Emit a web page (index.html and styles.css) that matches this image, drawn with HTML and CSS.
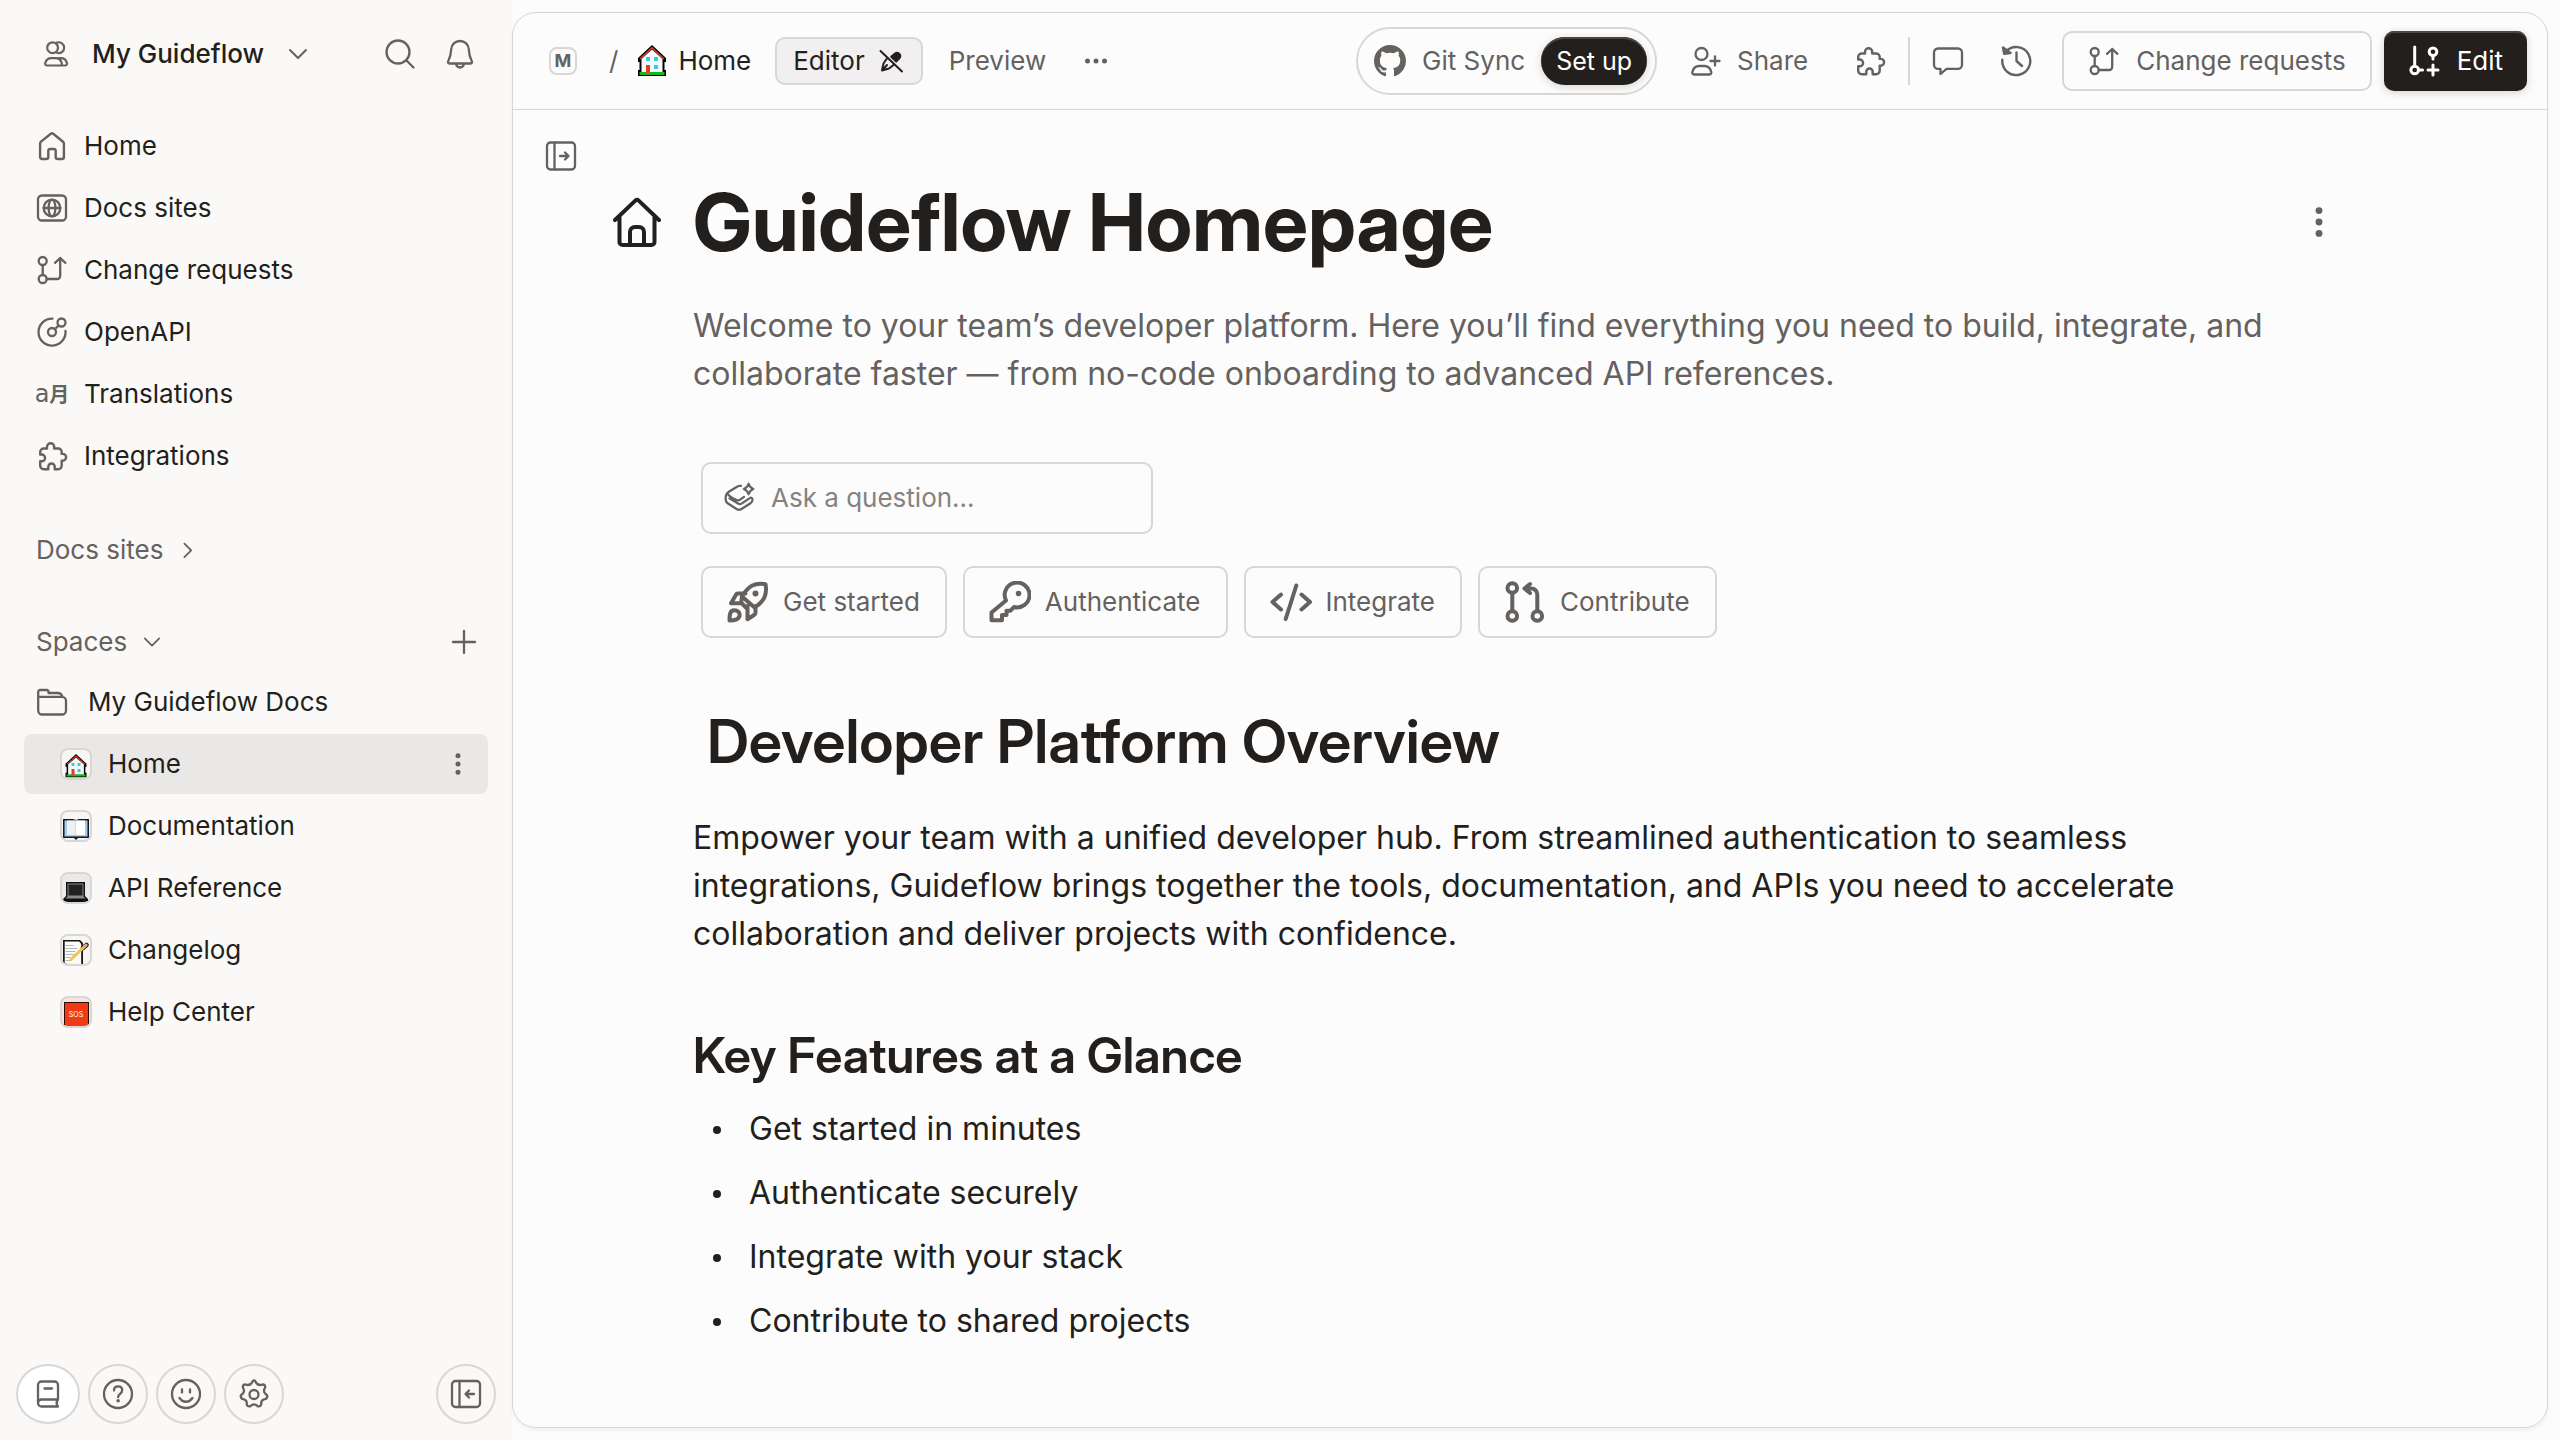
FILE: index.html
```html
<!DOCTYPE html>
<html lang="en">
<head>
<meta charset="utf-8">
<meta name="viewport" content="width=device-width, initial-scale=1">
<title>Guideflow Homepage</title>
<link rel="stylesheet" href="styles.css">
</head>
<body>
<svg class="sprite" aria-hidden="true">
  <symbol id="people" viewBox="0 0 32 32" stroke-width="2.2"><circle cx="12.6" cy="9.7" r="5.4"/><path d="M17 4.6a5.4 5.4 0 1 1 0 10.2M7 27.5h13a1.8 1.8 0 0 0 1.8-2.2C21 22 18.500 20.200 15.500 20.200h-4C8.500 20.200 6 22 5.200 25.300A1.800 1.800 0 0 0 7 27.500zM19 20.200h2c3 0 5.200 1.800 6 5.100a1.800 1.800 0 0 1-1.800 2.200H20"/></symbol>
  <symbol id="search" viewBox="0 0 32 32" stroke-width="2.3"><circle cx="14" cy="14" r="11.500"/><path d="M22.300 22.300l7.200 7.200"/></symbol>
  <symbol id="bell" viewBox="0 0 32 32" stroke-width="2.3"><path d="M16 3c-5 0-8.500 3.600-8.800 8.300C7 17 6.500 19 4.200 23.200c-.6 1.200 0 2.300 1.200 2.300h21.200c1.200 0 1.800-1.100 1.200-2.300C25.500 19 25 17 24.800 11.300 24.500 6.600 21 3 16 3zM12 26c.6 2.300 2 3.500 4 3.500s3.400-1.200 4-3.500"/></symbol>
  <symbol id="down" viewBox="0 0 20 20"><path d="M2 6l8 8 8-8"/></symbol>
  <symbol id="right" viewBox="0 0 20 20"><path d="M6 3l7.500 7.500L6 18"/></symbol>
  <symbol id="home" viewBox="0 0 32 32" stroke-width="2.4"><path d="M14.800 3.800a2 2 0 0 1 2.400 0L27 11.700a2.500 2.500 0 0 1 .9 1.900V27a2 2 0 0 1-2 2h-4.200a2 2 0 0 1-2-2v-6a2 2 0 0 0-2-2h-3.400a2 2 0 0 0-2 2v6a2 2 0 0 1-2 2H6.100a2 2 0 0 1-2-2V13.600A2.500 2.500 0 0 1 5 11.700z"/></symbol>
  <symbol id="site" viewBox="0 0 32 32" stroke-width="2.300"><rect x="2" y="3.500" width="28" height="25" rx="4"/><circle cx="16" cy="16" r="8.300"/><ellipse cx="16" cy="16" rx="3.400" ry="8.300"/><path d="M7.700 16h16.600"/></symbol>
  <symbol id="change" viewBox="0 0 32 32" stroke-width="2.300"><circle cx="6.700" cy="7" r="4"/><circle cx="6.700" cy="25" r="4"/><path d="M6.700 11v10M10.700 25h10.500a3 3 0 0 0 3-3V4M19 8.800L24.200 4l5.200 4.800"/></symbol>
  <symbol id="api" viewBox="0 0 32 32" stroke-width="2.300"><path d="M16.500 2.600A13.500 13.500 0 1 0 29.500 15M18.800 13.200l3.800-3.800"/><circle cx="16" cy="16" r="4"/><circle cx="25.500" cy="6.500" r="4"/></symbol>
  <symbol id="puzzle" viewBox="0 0 32 32" stroke-width="2.400"><path d="M11 8.500V6.800a3.600 3.600 0 0 1 7.200 0v1.700h4A3.500 3.500 0 0 1 25.700 12v1.900h1a3.400 3.400 0 0 1 0 6.800h-1v5a3.500 3.500 0 0 1-3.500 3.500h-3.500v-2.500a3.200 3.200 0 0 0-6.400 0v2.500H7.700a3.500 3.500 0 0 1-3.500-3.500v-4.400h1.500a3.400 3.400 0 0 0 0-6.800H4.200V12a3.500 3.500 0 0 1 3.500-3.500z"/></symbol>
  <symbol id="plus" viewBox="0 0 32 32" stroke-width="2.300"><path d="M16 5v22M5 16h22"/></symbol>
  <symbol id="folder" viewBox="0 0 32 32" stroke-width="2.300"><path d="M2.200 10.800V6a2 2 0 0 1 2-2H11a1.500 1.500 0 0 1 1.500 1.500V7h9.300c2.600 0 4 1.300 4.600 3.800M2.200 10.800H26a4 4 0 0 1 4 4v9.700a4 4 0 0 1-4 4H6.200a4 4 0 0 1-4-4z"/></symbol>
  <symbol id="book" viewBox="0 0 32 32" stroke-width="2.300"><path d="M26 21.500V7a3.500 3.500 0 0 0-3.500-3.500h-13A3.500 3.500 0 0 0 6 7v18a3.500 3.500 0 0 0 3.500 3.500H26c-1.800-2-1.800-4.500 0-7H9.500A3.500 3.500 0 0 0 6 25M12.500 10.500h7.500"/></symbol>
  <symbol id="help" viewBox="0 0 32 32" stroke-width="2.300"><circle cx="16" cy="16" r="14"/><path d="M12 12.500c0-2.600 1.700-4.200 4.100-4.200s4.100 1.600 4.100 3.900c0 3.600-4.100 3.700-4.100 7"/><circle class="dot" cx="16.100" cy="22.700" r="1.800"/></symbol>
  <symbol id="smile" viewBox="0 0 32 32" stroke-width="2.300"><circle cx="16" cy="16" r="14"/><path d="M12 11.500v3M20 11.500v3M9.500 20c3.500 5 9.500 5 13 0"/></symbol>
  <symbol id="gear" viewBox="0 0 32 32" stroke-width="2.300"><path d="M14.600 3.400Q16 1.600 17.400 3.400Q19.700 8.300 24.600 6.500Q27.500 6.500 27.100 9.700Q24.300 14.100 28.800 16.900Q30 19 27.900 20.800Q22.600 21.300 23.300 26.500Q22.500 29 19.700 28.300Q16 24.500 12.300 28.300Q9.500 29 8.700 26.500Q9.400 21.300 4.100 20.800Q2 19 3.200 16.900Q7.700 14.100 4.900 9.700Q4.500 6.500 7.400 6.500Q12.300 8.300 14.600 3.400z"/><circle cx="16" cy="16.500" r="4.500"/></symbol>
  <symbol id="collapse" viewBox="0 0 32 32" stroke-width="2.300"><rect x="2" y="3" width="28" height="26" rx="3.500"/><path d="M9.500 3v26M24 16h-8M19 12.500L15.500 16l3.500 3.500"/></symbol>
  <symbol id="expand" viewBox="0 0 32 32" stroke-width="2.300"><rect x="2" y="2.500" width="28" height="27" rx="3.500"/><path d="M9.500 3v26M15 16h8M20 12.500l3.500 3.500-3.500 3.500"/></symbol>
  <symbol id="dots" viewBox="0 0 32 32"><g class="dot"><circle cx="16" cy="7.700" r="2.500"/><circle cx="16" cy="16" r="2.500"/><circle cx="16" cy="24.300" r="2.500"/></g></symbol>
  <symbol id="more" viewBox="0 0 32 32"><g class="dot"><circle cx="7.500" cy="16" r="2.500"/><circle cx="16" cy="16" r="2.500"/><circle cx="24.500" cy="16" r="2.500"/></g></symbol>
  <symbol id="pencil-off" viewBox="0 0 28 28"><path fill="#231f1c" d="M18 6.500a3.300 3.300 0 0 1 4.800 4.300l-3.600 3.800-5-4.800z"/><path d="M9.500 12l-3 4.500-1.500 7 7-2 4.500-3.500M3.500 4l21.500 20.500M5 23.500l5-5.500"/></symbol>
  <symbol id="github" viewBox="0 0 16 16"><path class="dot" d="M8 0C3.580 0 0 3.580 0 8c0 3.540 2.290 6.530 5.470 7.590.4.070.55-.17.55-.38 0-.19-.01-.82-.01-1.490-2.010.37-2.530-.49-2.690-.94-.09-.23-.48-.94-.82-1.130-.28-.15-.68-.52-.01-.53.63-.01 1.080.58 1.230.82.72 1.210 1.870.87 2.330.66.070-.52.28-.87.51-1.070-1.780-.2-3.640-.89-3.640-3.950 0-.87.31-1.590.82-2.150-.08-.2-.36-1.020.08-2.120 0 0 .67-.21 2.200.82.64-.18 1.320-.27 2-.27s1.360.09 2 .27c1.530-1.040 2.200-.82 2.200-.82.44 1.100.16 1.920.08 2.120.51.56.82 1.270.82 2.150 0 3.070-1.870 3.750-3.650 3.950.29.25.54.73.54 1.480 0 1.070-.01 1.930-.01 2.200 0 .21.15.46.55.38A8.010 8.010 0 0 0 16 8c0-4.420-3.580-8-8-8z"/></symbol>
  <symbol id="invite" viewBox="0 0 32 32" stroke-width="2.300"><circle cx="12.500" cy="9" r="6"/><path d="M5 29.500h15.500a1.800 1.800 0 0 0 1.800-2.200c-.9-4-3.500-6.300-7-6.300h-5c-3.500 0-6.100 2.300-7 6.300A1.800 1.800 0 0 0 5 29.500zM26 11.500v9M21.500 16H30.500"/></symbol>
  <symbol id="comment" viewBox="0 0 32 32" stroke-width="2.300"><path d="M6 3.500h20a4 4 0 0 1 4 4v12.300a4 4 0 0 1-4 4H14.500L8.500 29v-5.200H6a4 4 0 0 1-4-4V7.500a4 4 0 0 1 4-4z"/></symbol>
  <symbol id="history" viewBox="0 0 32 32" stroke-width="2.400"><path d="M2.300 14.800A14 14 0 1 0 6 6.500M3 2.500l1.200 6.300 6.300-.8zM16.500 7.500V16l5.500 5"/></symbol>
  <symbol id="edit" viewBox="0 0 32 32"><path d="M5.700 2v18.500M10 25h3.500M24 11v3M24 20v10M19 25h10"/><circle cx="5.700" cy="25" r="3.800"/><circle cx="24" cy="6.800" r="3.800"/></symbol>
  <symbol id="house-line" viewBox="0 0 48 52"><path d="M2 24L22.300 4.600a2.500 2.500 0 0 1 3.400 0L46 24M6.500 20v26a3 3 0 0 0 3 3h29a3 3 0 0 0 3-3V20M17 49V36a5 5 0 0 1 5-5h4a5 5 0 0 1 5 5v13"/></symbol>
  <symbol id="assist" viewBox="0 0 32 32" stroke-width="2.200"><path d="M18 3.800c-1.500-.2-2.700.1-4 .9L5.800 9.800C3.500 11.300 2.600 13.500 2.600 16.500c0 2.500.8 4 2.400 5l8.500 5.500c1.700 1 3.300 1 5 0l9-5.700c1.500-1 2-2 2-3.500 0-2-1.200-2.700-2.700-1.700L18.500 21.700c-1 .7-2 .7-3 0L6.500 16.300M4.500 11.500c1.200 2.200 3 3.500 5 4.500l4 1.900c1.300.6 2.500.5 3.700-.3L21 14.900M25.600 1.700c.9 3 1.900 4.300 4.700 5.300-2.800 1-3.800 2.300-4.700 5.300-.9-3-1.900-4.300-4.700-5.300 2.800-1 3.800-2.300 4.700-5.300z"/></symbol>
  <symbol id="rocket" viewBox="0 0 42 42"><path d="M38.500 3.200c-11-2-17.500 2.300-23.500 12.300l12.500 11c9.500-6 13-12.500 11-23.300zM18.500 12.500H11a2 2 0 0 0-2 1.200l-5 8.500h10l1-6.700M14 21.500l6 6M20.500 25v13.300l6.500-4.300a3 3 0 0 0 1.500-2.700V25M2.500 39.500c0-6 .5-10.300 4.500-10.300s6.200 2.500 5.500 5.800c-.7 3.500-5 4.500-10 4.500z"/><circle class="dot" cx="28.500" cy="12.500" r="3"/></symbol>
  <symbol id="key" viewBox="0 0 42 42"><path d="M17 19.500a12.400 12.400 0 1 1 8 6.500l-3.500 3.700h-4V34h-4.500v5.300H2.500V31.500z"/><circle class="dot" cx="29.500" cy="12.500" r="2.800"/></symbol>
  <symbol id="code" viewBox="0 0 42 42"><path d="M11 13.500L2.500 21l8.500 7.500M31.500 13.500L40 21l-8.500 7.500M26.300 4.500L15.700 38"/></symbol>
  <symbol id="pull" viewBox="0 0 42 42"><circle cx="8.300" cy="7" r="4.800"/><circle cx="8.300" cy="35" r="4.800"/><circle cx="33.300" cy="35" r="4.800"/><path d="M8.300 12v18M33.300 30V13.500a6 6 0 0 0-6-6H21M26 3l-5.500 4.500L26 12"/></symbol>
  <symbol id="emoji-house" viewBox="0 0 28 32"><path fill="#000" d="M0 31v-6h1.500V17H0v-4L14 0l14 13v4h-1.500v8H28v6z"/><path fill="#f4fafc" d="M3.500 14L14 4.500 24.500 14v14h-21z"/><path fill="none" stroke="#e0442a" stroke-width="1.500" d="M2.500 13.500L14 2.800l11.500 10.700"/><path fill="#34cbe8" d="M8 12h4v4H8zM16 12h4v4h-4zM16 20h4v4h-4z"/><path fill="#19b51c" d="M1.500 27h25v3h-25z"/><path fill="#e23c22" d="M8 20h4v8H8z"/></symbol>
  <symbol id="emoji-book" viewBox="0 0 26 22"><path fill="#0f1720" d="M0 1h10l3 1 3-1h10v19H15l-2 2-2-2H0z"/><path fill="#a9c9e8" d="M1.500 2.500h23v16h-23z"/><path fill="#eef0f2" d="M4 2.500h8.500V17H4z"/><path fill="#fff" d="M13 2.500h9V17h-9z"/></symbol>
  <symbol id="emoji-laptop" viewBox="0 0 26 20"><path fill="#111" d="M3 0h19v14l3 3v3H0v-3l3-3z"/><path fill="#8a8a8a" d="M4.500 1.500h16v13l2 2H2.500l2-2z"/><path fill="#222" d="M5.500 2.500h14v11h-14z"/></symbol>
  <symbol id="emoji-memo" viewBox="0 0 26 24"><path fill="#151515" d="M0 0h17l3 3v21H0z"/><path fill="#fafaf8" d="M1.700 1.500h14.500l2 2.500v20H1.700z"/><path stroke="#b5b5b5" stroke-width="1" d="M3 5.500h7M3 8.500h11M3 11.500h9M3 14.500h8M3 17.500h4M3 20.500h5"/><path stroke="#222" stroke-width="4.500" stroke-linecap="round" d="M20 8l3.500-3"/><path stroke="#f0c455" stroke-width="3" d="M8 19.500L21 7"/><path stroke="#e0a888" stroke-width="3" d="M21 7l2-1.800"/></symbol>
</svg>

<div class="app">
  <aside class="sidebar">
    <header class="org">
      <button class="org-switch" type="button"><svg class="icon"><use href="#people"/></svg><span>My Guideflow</span><svg class="caret"><use href="#down"/></svg></button>
      <div class="org-actions">
        <button type="button" aria-label="Search"><svg class="icon"><use href="#search"/></svg></button>
        <button type="button" aria-label="Notifications"><svg class="icon"><use href="#bell"/></svg></button>
      </div>
    </header>
    <nav class="nav" aria-label="Main">
      <a href="#"><svg class="icon"><use href="#home"/></svg>Home</a>
      <a href="#"><svg class="icon"><use href="#site"/></svg>Docs sites</a>
      <a href="#"><svg class="icon"><use href="#change"/></svg>Change requests</a>
      <a href="#"><svg class="icon"><use href="#api"/></svg>OpenAPI</a>
      <a href="#"><span class="glyphs" aria-hidden="true"><b>a</b><i>月</i></span>Translations</a>
      <a href="#"><svg class="icon"><use href="#puzzle"/></svg>Integrations</a>
    </nav>
    <div class="section docs">
      <button type="button">Docs sites<svg class="caret small"><use href="#right"/></svg></button>
    </div>
    <div class="section">
      <button type="button">Spaces<svg class="caret small"><use href="#down"/></svg></button>
      <button type="button" aria-label="New space"><svg class="icon"><use href="#plus"/></svg></button>
    </div>
    <nav class="spaces" aria-label="Spaces">
      <a class="folder" href="#"><svg class="icon"><use href="#folder"/></svg>My Guideflow Docs</a>
      <div class="space current"><a href="#"><span class="badge"><svg class="e-house"><use href="#emoji-house"/></svg></span>Home</a><button type="button" aria-label="Home options"><svg class="icon"><use href="#dots"/></svg></button></div>
      <div class="space"><a href="#"><span class="badge"><svg class="e-book"><use href="#emoji-book"/></svg></span>Documentation</a></div>
      <div class="space"><a href="#"><span class="badge grey"><svg class="e-laptop"><use href="#emoji-laptop"/></svg></span>API Reference</a></div>
      <div class="space"><a href="#"><span class="badge"><svg class="e-memo"><use href="#emoji-memo"/></svg></span>Changelog</a></div>
      <div class="space"><a href="#"><span class="badge red"><span class="sos">SOS</span></span>Help Center</a></div>
    </nav>
    <footer class="tools">
      <button class="wide" type="button" aria-label="Documentation"><svg class="icon"><use href="#book"/></svg></button>
      <button type="button" aria-label="Help"><svg class="icon"><use href="#help"/></svg></button>
      <button type="button" aria-label="Feedback"><svg class="icon"><use href="#smile"/></svg></button>
      <button type="button" aria-label="Settings"><svg class="icon"><use href="#gear"/></svg></button>
      <button class="last" type="button" aria-label="Collapse sidebar"><svg class="icon"><use href="#collapse"/></svg></button>
    </footer>
  </aside>

  <main class="card">
    <header class="topbar">
      <div class="crumbs">
        <a class="letter" href="#">M</a>
        <span class="slash">/</span>
        <a class="crumb" href="#"><svg class="crumb-house"><use href="#emoji-house"/></svg>Home</a>
        <button class="tab active" type="button">Editor<svg class="pencil"><use href="#pencil-off"/></svg></button>
        <button class="tab" type="button">Preview</button>
        <button class="plain" type="button" aria-label="More"><svg class="icon"><use href="#more"/></svg></button>
      </div>
      <div class="actions">
        <div class="git"><svg class="icon"><use href="#github"/></svg><span>Git Sync</span><button type="button">Set up</button></div>
        <button class="plain share" type="button"><svg class="icon"><use href="#invite"/></svg>Share</button>
        <button class="plain" type="button" aria-label="Integrations"><svg class="icon"><use href="#puzzle"/></svg></button>
        <span class="rule"></span>
        <button class="plain comments" type="button" aria-label="Comments"><svg class="icon"><use href="#comment"/></svg></button>
        <button class="plain" type="button" aria-label="History"><svg class="icon"><use href="#history"/></svg></button>
        <button class="outline" type="button"><svg class="icon"><use href="#change"/></svg>Change requests</button>
        <button class="primary" type="button"><svg class="icon"><use href="#edit"/></svg>Edit</button>
      </div>
    </header>
    <div class="subbar"><button class="plain" type="button" aria-label="Show table of contents"><svg class="icon"><use href="#expand"/></svg></button></div>
    <article class="page">
      <svg class="page-icon"><use href="#house-line"/></svg>
      <h1>Guideflow Homepage</h1>
      <button class="plain page-menu" type="button" aria-label="Page options"><svg class="big-dots"><use href="#dots"/></svg></button>
      <div class="body">
        <p class="lead">Welcome to your team’s developer platform. Here you’ll find everything you need to build, integrate, and collaborate faster — from no-code onboarding to advanced API references.</p>
        <label class="ask"><svg class="icon"><use href="#assist"/></svg><input type="text" placeholder="Ask a question..." aria-label="Ask a question"></label>
        <div class="links">
          <a href="#"><svg class="link-icon"><use href="#rocket"/></svg>Get started</a>
          <a href="#"><svg class="link-icon"><use href="#key"/></svg>Authenticate</a>
          <a href="#"><svg class="link-icon"><use href="#code"/></svg>Integrate</a>
          <a href="#"><svg class="link-icon"><use href="#pull"/></svg>Contribute</a>
        </div>
        <h2>Developer Platform Overview</h2>
        <p>Empower your team with a unified developer hub. From streamlined authentication to seamless integrations, Guideflow brings together the tools, documentation, and APIs you need to accelerate collaboration and deliver projects with confidence.</p>
        <h3>Key Features at a Glance</h3>
        <ul>
          <li>Get started in minutes</li>
          <li>Authenticate securely</li>
          <li>Integrate with your stack</li>
          <li>Contribute to shared projects</li>
        </ul>
      </div>
    </article>
  </main>
</div>
</body>
</html>
```
FILE: styles.css
```css
:root {
  --ink: #231f1c;
  --muted: #64615f;
  --line: #d9d7d5;
  --paper: #fcfcfc;
}

* { box-sizing: border-box; }

body {
  margin: 0;
  background: var(--paper);
  color: var(--ink);
  font-family: Inter, "Noto Sans CJK SC", sans-serif;
  font-size: 26px;
  line-height: 32px;
}

button, input {
  margin: 0;
  padding: 0;
  border: 0;
  background: none;
  color: inherit;
  font: inherit;
}

a { color: inherit; text-decoration: none; }

.sprite { display: none; }

svg {
  display: block;
  flex: none;
  fill: none;
  stroke: var(--muted);
  stroke-width: 2;
  stroke-linecap: round;
  stroke-linejoin: round;
}

.dot { fill: var(--muted); stroke: none; }
.icon { width: 32px; height: 32px; }
.caret { width: 20px; height: 20px; }
.small { width: 18px; height: 18px; }

.app { display: flex; min-height: 100vh; }

/* Sidebar */

.sidebar {
  display: flex;
  flex: none;
  flex-direction: column;
  width: 512px;
  padding: 24px 12px 16px;
  background: #faf9f7;
}

.org {
  display: flex;
  align-items: center;
  justify-content: space-between;
  height: 60px;
  padding: 0 24px 0 28px;
}

.org-switch { display: flex; align-items: center; gap: 20px; font-weight: 500; }
.org-switch .caret { margin-left: 4px; }
.org-actions { display: flex; gap: 28px; }

.nav { display: grid; gap: 2px; margin-top: 32px; padding: 0 24px; }

.nav a { display: flex; align-items: center; gap: 16px; height: 60px; }

.glyphs {
  display: flex;
  align-items: center;
  justify-content: center;
  width: 32px;
  color: var(--muted);
}

.glyphs b { font-family: "DejaVu Sans", sans-serif; font-size: 24px; font-weight: 400; }
.glyphs i { font-family: "Noto Sans CJK SC", sans-serif; font-size: 20px; font-style: normal; font-weight: 700; }

.section {
  display: flex;
  align-items: center;
  justify-content: space-between;
  height: 60px;
  padding: 0 20px 0 24px;
  color: var(--muted);
}

.section.docs { margin: 34px 0 32px; }
.section button { display: flex; align-items: center; gap: 16px; }

.spaces { display: grid; gap: 2px; padding: 0 12px; }

.folder { display: flex; align-items: center; gap: 20px; height: 60px; padding-left: 12px; }

.space {
  display: flex;
  align-items: center;
  height: 60px;
  padding: 0 14px 0 36px;
  border-radius: 8px;
}

.space.current { background: #e9e8e6; }
.space a { display: flex; flex: 1; align-items: center; gap: 16px; }

.badge {
  display: flex;
  align-items: flex-end;
  justify-content: center;
  width: 32px;
  height: 32px;
  overflow: hidden;
  border: 2px solid var(--line);
  border-radius: 8px;
  background: #f7f6f5;
}

.badge svg { stroke: none; }
.badge.grey { background: #ebeae8; }
.badge.red { background: #f8e4de; }
.e-house { width: 22px; height: 24px; }
.e-book { width: 26px; height: 22px; }
.e-laptop { width: 26px; height: 20px; }
.e-memo { width: 26px; height: 24px; }

.sos {
  flex: none;
  width: 25px;
  border: 1px solid #2a0d06;
  border-bottom: 0;
  background: #f03a14;
  color: #fff;
  font-size: 7px;
  line-height: 23px;
  text-align: center;
}

.tools { display: flex; gap: 8px; margin-top: auto; padding: 0 4px; }

.tools button {
  display: grid;
  place-items: center;
  width: 60px;
  height: 60px;
  border: 2px solid var(--line);
  border-radius: 50%;
}

.tools .wide { width: 64px; background: #fff; }
.tools .last { margin-left: auto; }

/* Main card */

.card {
  flex: 1;
  min-width: 0;
  margin: 12px 12px 12px 0;
  border: 1px solid var(--line);
  border-radius: 24px;
  box-shadow: 0 2px 4px rgb(0 0 0 / 6%);
}

.topbar {
  display: flex;
  align-items: center;
  justify-content: space-between;
  height: 97px;
  padding: 0 20px 0 36px;
  border-bottom: 1px solid var(--line);
}

.crumbs, .actions { display: flex; align-items: center; }

.letter {
  width: 28px;
  height: 28px;
  border: 2px solid var(--line);
  border-radius: 8px;
  color: var(--muted);
  font-size: 18px;
  font-weight: 700;
  line-height: 24px;
  text-align: center;
}

.slash { margin: 0 20px 0 32px; color: var(--muted); }
.crumb { display: flex; align-items: center; gap: 12px; }
.crumb-house { width: 28px; height: 32px; stroke: none; }

.tab {
  display: flex;
  align-items: center;
  gap: 12px;
  height: 48px;
  padding: 0 16px;
  border: 2px solid transparent;
  border-radius: 10px;
  color: var(--muted);
}

.tab.active {
  margin: 0 8px 0 24px;
  border-color: var(--line);
  background: #f1efef;
  color: var(--ink);
}

.pencil { width: 28px; height: 28px; }
.pencil, .page-icon { stroke: var(--ink); }

.plain { display: flex; align-items: center; color: var(--muted); }
.tab + .plain { margin-left: 16px; }

.git {
  display: flex;
  align-items: center;
  gap: 16px;
  height: 68px;
  padding: 0 8px 0 16px;
  border: 2px solid var(--line);
  border-radius: 34px;
  color: var(--muted);
}

.git button {
  height: 48px;
  padding: 0 15px;
  border-radius: 24px;
  background: var(--ink);
  box-shadow: 0 2px 8px rgb(0 0 0 / 16%), inset 0 2px 0 #4b4745;
  color: #fff;
  font-size: 25px;
}

.share { gap: 16px; margin: 0 46px 0 32px; }
.rule { width: 2px; height: 48px; margin: 0 22px; background: var(--line); }
.comments { margin-right: 36px; }

.outline, .primary {
  display: flex;
  align-items: center;
  gap: 16px;
  height: 60px;
  padding: 0 24px;
  border-radius: 10px;
}

.outline { margin: 0 12px 0 30px; border: 2px solid var(--line); color: var(--muted); }

.primary {
  padding-left: 25px;
  background: var(--ink);
  box-shadow: 0 2px 8px rgb(0 0 0 / 16%), inset 0 2px 0 #4b4745;
  color: #fff;
}

.primary svg { stroke: #fff; stroke-width: 3; }

.subbar { padding: 30px 32px 0; }

.page {
  display: grid;
  grid-template-columns: 48px minmax(0, 1632px) 52px;
  align-items: center;
  padding: 0 100px 64px;
}

.page-icon { width: 48px; height: 52px; stroke-width: 4; }
.page-menu { justify-content: center; }
.big-dots { width: 44px; height: 44px; }

h1, h2, h3 { margin: 0; font-family: "Inter Display", Inter, sans-serif; font-weight: 600; }
h1 { padding-left: 32px; font-size: 80px; font-weight: 700; line-height: 100px; }
h2 { font-size: 60px; line-height: 72px; }
h3 { font-size: 49px; line-height: 60px; }
p, ul { margin: 0; }

.body { grid-column: 2; padding-left: 32px; font-size: 32px; line-height: 48px; }
.body h2 { margin: 67px 14px 37px; }
.body h3 { margin: 68px 0 19px; }
.lead { margin-top: 30px; color: var(--muted); }

.ask {
  display: flex;
  align-items: center;
  gap: 16px;
  width: 452px;
  height: 72px;
  margin: 64px 8px 32px;
  padding: 0 20px;
  border: 2px solid var(--line);
  border-radius: 10px;
  font-size: 26px;
}

.ask input { flex: 1; min-width: 0; outline: 0; }
.ask input::placeholder { color: #858280; opacity: 1; }

.links { display: flex; flex-wrap: wrap; gap: 16px; margin: 0 8px; font-size: 26px; color: var(--muted); }

.links a {
  display: flex;
  align-items: center;
  gap: 14px;
  height: 72px;
  padding: 0 25px 0 24px;
  border: 2px solid var(--line);
  border-radius: 10px;
}

.link-icon { width: 42px; height: 42px; stroke-width: 4; }

ul { display: grid; gap: 16px; padding: 0 0 0 56px; list-style: none; }
li::before {
  display: inline-block;
  width: 8px;
  height: 8px;
  margin: 0 28px 6px -36px;
  border-radius: 50%;
  background: var(--ink);
  content: "";
}
```
